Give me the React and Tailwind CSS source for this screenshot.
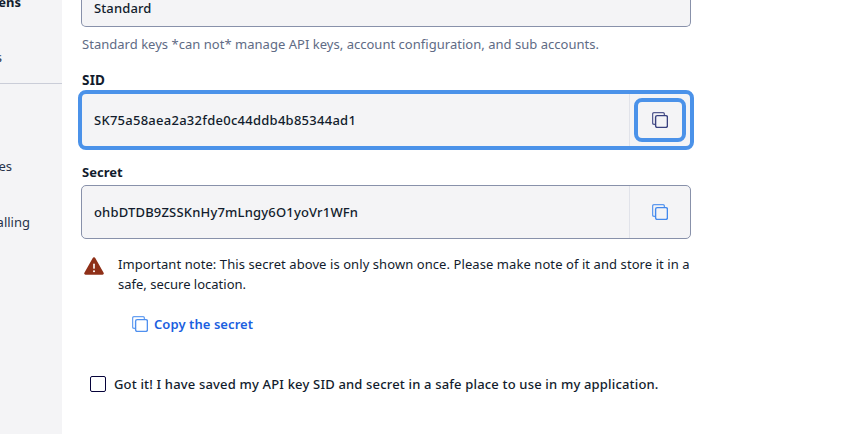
import React from "react";

function CopyIcon({ className = "" }) {
  return (
    <svg width="16" height="16" viewBox="0 0 16 16" fill="none" stroke="currentColor" className={className}>
      <rect x="3.6" y="3.6" width="11.8" height="11.8" rx="1.6" strokeWidth="1.4" />
      <path
        d="M12.4 3.4V2.2A1.6 1.6 0 0 0 10.8.6H2.2A1.6 1.6 0 0 0 .6 2.2v8.6a1.6 1.6 0 0 0 1.6 1.6h1.2"
        strokeWidth="1.3"
        strokeOpacity="0.85"
      />
    </svg>
  );
}

function WarningIcon() {
  return (
    <svg width="20" height="18" viewBox="0 0 20 18" className="shrink-0">
      <path
        d="M8.6 1.2a1.6 1.6 0 0 1 2.8 0l8.2 14.5A1.4 1.4 0 0 1 18.4 17.8H1.6a1.4 1.4 0 0 1-1.2-2.1z"
        fill="#8f3018"
      />
      <path d="M10 7.3v3.8" stroke="#fff" strokeWidth="1.6" strokeLinecap="round" />
      <circle cx="10" cy="14.2" r="1" fill="#fff" />
    </svg>
  );
}

function Sidebar() {
  return (
    <nav className="h-full w-[62px] shrink-0 overflow-hidden bg-[#f4f4f6] leading-5 text-[#28334a]">
      <div className="-mt-[8px] flex h-5 w-[21px] justify-end font-bold text-[#121c2d]">ens</div>
      <div className="mt-[35px] flex h-5 w-[2px] justify-end">s</div>
      <div className="mt-4 h-px bg-[#cacdd8]" />
      <div className="mt-[72px] flex h-5 w-[12px] justify-end">es</div>
      <div className="mt-9 flex h-5 w-[30px] justify-end">alling</div>
    </nav>
  );
}

export default function App() {
  return (
    <div className="flex h-[434px] w-[859px] overflow-hidden bg-white font-['Noto_Sans',sans-serif] text-[13px] text-[#121c2d]">
      <Sidebar />
      <main className="flex w-[629px] shrink-0 flex-col pl-[19px] leading-5">
        <div className="h-[27px] rounded-b-[5px] border border-t-0 border-[#8891aa] bg-[#f4f4f6] pl-3 font-medium tracking-[0.12px]">
          <span className="-mt-[2px] block">Standard</span>
        </div>
        <p className="ml-px mt-[7px] h-5 whitespace-nowrap tracking-[0.025px] text-[#606b85]">
          Standard keys *can not* manage API keys, account configuration, and sub accounts.
        </p>
        <div className="ml-px mt-4 h-5 text-[13.5px] font-bold tracking-[0.2px]">SID</div>
        <div className="-mx-[3px] flex h-[60px] shrink-0 rounded-[8px] border-4 border-[#4b92e9] bg-[#f4f4f6]">
          <div className="flex flex-1 items-center pl-3 font-medium tracking-[0.26px]">
            <span>SK75a58aea2a32fde0c44ddb4b85344ad1</span>
          </div>
          <div className="flex w-[61px] border-l border-[#e1e3ea] py-1 pl-1">
            <button className="flex h-11 w-[52px] items-center justify-center rounded-[8px] border-4 border-[#4b92e9] text-[#39417f]">
              <CopyIcon />
            </button>
          </div>
        </div>
        <div className="ml-px mt-3 h-5 font-bold">Secret</div>
        <div className="mt-[3px] flex h-[54px] shrink-0 rounded-[5px] border border-[#8891aa] bg-[#f4f4f6]">
          <div className="flex flex-1 items-center pl-3 font-medium tracking-[0.18px]">
            <span>ohbDTDB9ZSSKnHy7mLngy6O1yoVr1WFn</span>
          </div>
          <div className="flex w-[61px] items-center justify-center border-l border-[#e1e3ea] text-[#4389ed]">
            <CopyIcon />
          </div>
        </div>
        <div className="ml-[3px] mt-[15px] flex gap-[14px]">
          <div className="pt-[3px]">
            <WarningIcon />
          </div>
          <p className="whitespace-nowrap tracking-[0.075px]">
            <span>Important note: This secret above is only shown once. Please make note of it and store it in a</span>
            <br />
            <span className="tracking-normal">safe, secure location.</span>
          </p>
        </div>
        <div className="ml-[51px] mt-5 flex h-5 items-center gap-[6px] font-semibold tracking-[0.07px] text-[#1b5fe0]">
          <CopyIcon className="text-[#4f90ef]" />
          <span>Copy the secret</span>
        </div>
        <label className="ml-[9px] mt-10 flex h-5 items-center gap-2 whitespace-nowrap font-medium tracking-[0.17px]">
          <span className="h-4 w-4 shrink-0 rounded-[2px] border border-[#06033a] bg-white" />
          <span>Got it! I have saved my API key SID and secret in a safe place to use in my application.</span>
        </label>
      </main>
    </div>
  );
}
